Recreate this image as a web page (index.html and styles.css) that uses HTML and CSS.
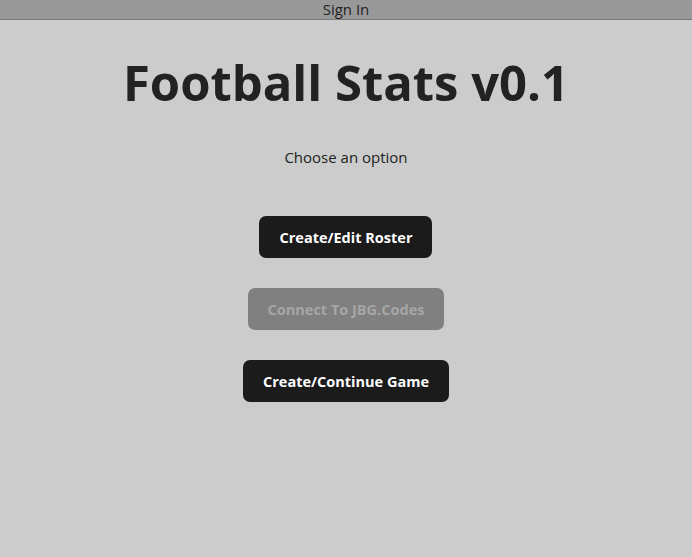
FILE: index.html
```html
<!DOCTYPE html>
<html>
<head>
<meta charset="utf-8">
<link rel="stylesheet" href="styles.css">
</head>
<body>
<div class="topbar">Sign In</div>
<main class="main">
  <h1 class="title">Football Stats v0.1</h1>
  <p class="subtitle">Choose an option</p>
  <div class="options">
    <button class="btn">Create/Edit Roster</button>
    <button class="btn btn-disabled" disabled>Connect To JBG.Codes</button>
    <button class="btn">Create/Continue Game</button>
  </div>
</main>
</body>
</html>
```
FILE: styles.css
```css
html, body {
  margin: 0;
  padding: 0;
  height: 100%;
}
body {
  background: #cccccc;
  font-family: "Open Sans", "Noto Sans", sans-serif;
  color: #222;
}
.topbar {
  box-sizing: border-box;
  height: 20px;
  padding-top: 1px;
  background: #999999;
  border-bottom: 1px solid #7a7a7a;
  text-align: center;
  font-size: 15px;
  line-height: 16px;
  color: #222;
}
.main {
  display: flex;
  flex-direction: column;
  align-items: center;
}
.title {
  margin: 34px 0 0;
  font-size: 49px;
  font-weight: 700;
  line-height: 56px;
  color: #222;
}
.subtitle {
  margin: 35px 0 0;
  font-size: 15px;
  line-height: 24px;
  color: #222;
}
.options {
  margin-top: 47px;
  display: flex;
  flex-direction: column;
  align-items: center;
  gap: 30px;
}
.btn {
  height: 42px;
  padding: 0 20px;
  border: none;
  border-radius: 7px;
  background: #1b1b1b;
  color: #ffffff;
  font-family: "Open Sans", "Noto Sans", sans-serif;
  font-size: 14.5px;
  font-weight: 700;
}
.btn-disabled {
  background: #808080;
  color: #a6a6a6;
}
```
